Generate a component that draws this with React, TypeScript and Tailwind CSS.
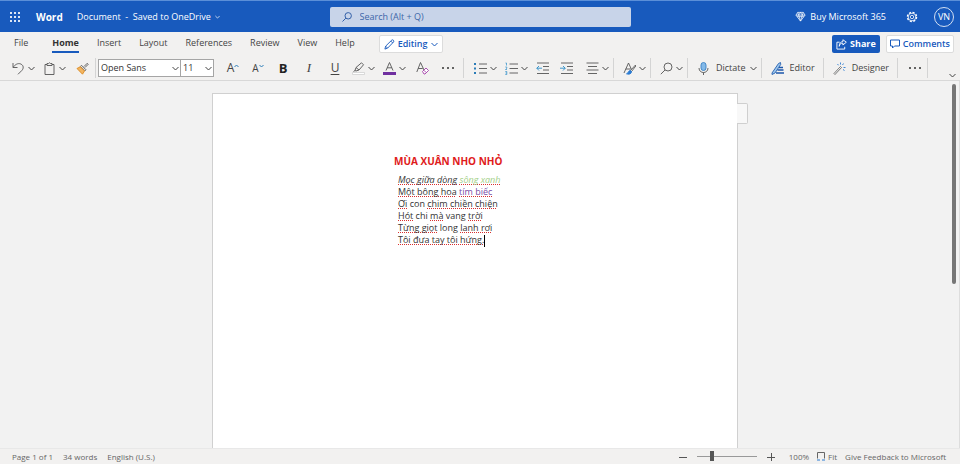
import React from "react";
import { clsx } from "clsx";

const TABS = ["File", "Home", "Insert", "Layout", "References", "Review", "View", "Help"];

type Word = { text: string; error?: boolean; tone?: string };

const POEM: { italic?: boolean; words: Word[] }[] = [
  {
    italic: true,
    words: [
      { text: "Mọc giữa dòng", error: true },
      { text: "sông xanh", error: true, tone: "text-[#a3cf86]" },
    ],
  },
  {
    words: [
      { text: "Một bông hoa", error: true },
      { text: "tím biếc", error: true, tone: "text-[#7a4aa5]" },
    ],
  },
  { words: [{ text: "Ơi", error: true }, { text: "con" }, { text: "chim chiền chiện", error: true }] },
  {
    words: [
      { text: "Hót", error: true },
      { text: "chi" },
      { text: "mà", error: true },
      { text: "vang" },
      { text: "trời", error: true },
    ],
  },
  { words: [{ text: "Từng giọt", error: true }, { text: "long" }, { text: "lanh rơi", error: true }] },
  { words: [{ text: "Tôi đưa tay tôi hứng.", error: true }] },
];

export default function App() {
  return (
    <div className="flex h-screen flex-col overflow-hidden bg-[#f2f1f0] font-['Open_Sans',sans-serif] text-[9px] leading-4 text-[#444]">
      <TopBar />
      <TabRow />
      <Toolbar />
      <Workspace />
      <StatusBar />
    </div>
  );
}

function TopBar() {
  return (
    <header className="flex h-8 shrink-0 items-center border-t border-[#5b8fd8] bg-[#185abd] px-1.5 text-white">
      <div className="flex flex-1 items-center">
        <button aria-label="App launcher" className="ml-1">
          <svg width="10" height="10" viewBox="0 0 10 10" fill="currentColor">
            {[0, 4, 8].map((y) => [0, 4, 8].map((x) => <rect key={`${x}-${y}`} x={x} y={y} width="2" height="2" rx=".7" />))}
          </svg>
        </button>
        <span className="ml-4 text-[10px] font-bold">Word</span>
        <button className="ml-3.5 flex items-center gap-1 whitespace-nowrap">
          Document&nbsp; -&nbsp; Saved to OneDrive
          <Chevron small />
        </button>
      </div>
      <label className="flex h-5 w-[301px] items-center gap-2 rounded-xs bg-[#c8d4e9] px-3 text-[#3360a8]">
        <SearchIcon size={10} />
        <input
          type="text"
          aria-label="Search"
          placeholder="Search (Alt + Q)"
          className="w-full bg-transparent outline-none placeholder:text-[#3d66a8]"
        />
      </label>
      <div className="flex flex-1 items-center justify-end">
        <button className="flex items-center gap-1 whitespace-nowrap">
          <svg width="11" height="11" viewBox="0 0 12 12" fill="none" stroke="currentColor" strokeWidth=".8" strokeLinejoin="round">
            <path d="M3 1.500h6l2 3L6 11 1 4.500zM1 4.500h10M4 4.500 6 11 8 4.500M3 1.500l1 3 2-3 2 3 1-3M2.300 6.200h7.400" />
          </svg>
          Buy Microsoft 365
        </button>
        <button aria-label="Settings" className="ml-5">
          <svg width="12" height="12" viewBox="0 0 12 12" fill="none" stroke="currentColor">
            <circle cx="6" cy="6" r="4.600" strokeWidth="1.300" strokeDasharray="2.100 1.510" />
            <circle cx="6" cy="6" r="3.800" strokeWidth=".8" />
            <circle cx="6" cy="6" r="1.700" strokeWidth=".8" />
          </svg>
        </button>
        <button className="ml-4 flex size-5 items-center justify-center rounded-full border border-white/80 text-[9px]">VN</button>
      </div>
    </header>
  );
}

function TabRow() {
  return (
    <nav className="flex h-6 shrink-0 items-center pr-1.5 pl-3.5">
      <div className="flex h-full items-center gap-[18px]">
        {TABS.map((tab) => (
          <button
            key={tab}
            className={clsx(
              "border-b-2",
              tab === "Home" ? "border-[#185abd] font-bold text-[#333]" : "border-transparent",
              tab === "File" && "mr-1.5"
            )}
          >
            {tab}
          </button>
        ))}
      </div>
      <button className="ml-6 flex h-[18px] items-center gap-[3px] rounded-xs border border-[#dcdcdc] bg-white px-1 font-semibold text-[#185abd]">
        <svg width="11" height="11" viewBox="0 0 12 12" fill="none" stroke="currentColor" strokeLinejoin="round">
          <path d="M1 11l.8-3.200L8.500 1.200q1-.7 1.800.2t.1 1.900L3.900 10zM7.500 2.300l2 2M1.900 7.900l2 2" />
        </svg>
        Editing
        <Chevron />
      </button>
      <div className="ml-auto flex gap-1.5">
        <button className="flex h-[18px] items-center gap-[3px] rounded-xs bg-[#185abd] px-1 font-bold text-white">
          <svg width="11" height="11" viewBox="0 0 12 12" fill="none" stroke="currentColor" strokeLinejoin="round">
            <path d="M4 3.500H1v7.500h8.500V8.500M3.500 8C4 5.500 5.500 4.500 7.500 4.500v2L11.300 3.500 7.500.8v2C5 3 3.500 5 3.500 8z" />
          </svg>
          Share
        </button>
        <button className="flex h-[18px] items-center gap-[3px] rounded-xs border border-[#dcdcdc] bg-white px-[3px] font-semibold text-[#185abd]">
          <svg width="10" height="10" viewBox="0 0 10 10" fill="none" stroke="currentColor">
            <path d="M.5 1h9v6H4.500L2.500 9V7h-2z" />
          </svg>
          Comments
        </button>
      </div>
    </nav>
  );
}

function Toolbar() {
  return (
    <div className="flex h-[25px] shrink-0 items-center border-b border-[#d8d8d8] pl-2">
      <Split label="Undo">
        <path d="M1 1v4.500h4.500M1.200 5.300C3 2.500 6 .8 8.800 2c3 1.400 3 4.500 1 6.500L6 12.300" />
      </Split>
      <Split label="Paste">
        <path d="M4 2.500H2v10h9v-10H9M4 1.500h1.500Q6.500 0 7.500 1.500H9v2H4z" />
      </Split>
      <Tool label="Format painter" className="w-6">
        <Glyph>
          <path d="M8 4.500l3.200-3.200 1 1L9 5.500" stroke="#555" />
          <path d="M5.500 3.300l4.500 4.500-1 1-4.500-4.500z" stroke="#555" fill="#fff" />
          <path d="M4.300 4.800l4.200 4.200-2 3.200L1 6.500z" fill="#f2b562" stroke="#dd8a1e" />
        </Glyph>
      </Tool>
      <div className="mr-0.5 ml-px h-5 w-px bg-[#d4d4d4]" />
      <Picker label="Font" value="Open Sans" className="w-[83px]" />
      <Picker label="Font size" value="11" className="-ml-px w-[34px]" />
      <Tool label="Grow font" className="ml-1.5 w-[26px]">
        <span className="text-xs">A</span>
        <svg width="5" height="9" viewBox="0 0 5 9" fill="none" stroke="#2b7cb8"><path d="M.5 3l2-2 2 2" /></svg>
      </Tool>
      <Tool label="Shrink font" className="w-6">
        <span className="text-[10px]">A</span>
        <svg width="5" height="9" viewBox="0 0 5 9" fill="none" stroke="#2b7cb8"><path d="M.5 1l2 2 2-2" /></svg>
      </Tool>
      <Tool label="Bold" className="w-[26px] text-[13px] font-bold text-[#222]">B</Tool>
      <Tool label="Italic" className="w-[26px] font-['Liberation_Serif',serif] text-[13px] italic">I</Tool>
      <Tool label="Underline" className="w-[26px] text-xs underline underline-offset-2">U</Tool>
      <Split label="Highlight">
        <path d="M3 8.500l1-3L9.500.8l2 2L7 8l-3 1zM4 5.500l3 2.500M3 8.500L1.500 9.500" />
        <path d="M.5 10.500h12v2H.5z" fill="#fff" stroke="#ccc" strokeWidth=".7" />
      </Split>
      <Split label="Font color">
        <path d="M3 8.500L6.500.5 10 8.500M4.200 5.800h4.600" />
        <path d="M0 10h13v3H0z" fill="#7030a0" stroke="none" />
      </Split>
      <Tool label="Clear formatting" className="w-6">
        <Glyph>
          <path d="M.8 10L4.500.5 8 8M2.200 6.500h4.500" />
          <path d="M6.500 9.500l3.500-3.500 2.500 2.500-3.500 3.500H8zM7.800 8.200l2.500 2.500" stroke="#a33fa8" fill="#fff" />
        </Glyph>
      </Tool>
      <Tool label="More font options" className="ml-0.5 w-6"><Dots /></Tool>
      <Divider />
      <Split label="Bullets">
        <path d="M5 2h8M5 6.500h8M5 11h8" />
        <path d="M0 1h2v2H0zM0 5.500h2v2H0zM0 10h2v2H0z" fill="#2b7cb8" stroke="none" />
      </Split>
      <Split label="Numbering">
        <path d="M4.500 2H13M4.500 6.500H13M4.500 11H13" />
        <path d="M.5 1h1v2.500M.3 5h1.500v1.200l-1.300 1.300h1.500M.3 9.500h1.500v3H.3M.5 11h1.300" stroke="#2b8cc8" strokeWidth=".7" />
      </Split>
      <Tool label="Decrease indent" className="mr-0.5 w-5">
        <Glyph>
          <path d="M1 1h12M7 4.500h6M7 8h6M1 11.500h12" />
          <path d="M6 6.200H.8M3 4L.8 6.200 3 8.500" stroke="#2b8cc8" />
        </Glyph>
      </Tool>
      <Tool label="Increase indent" className="mr-1 w-6">
        <Glyph>
          <path d="M1 1h12M7 4.500h6M7 8h6M1 11.500h12" />
          <path d="M0 6.200h5.200M3 4l2.200 2.200L3 8.500" stroke="#2b8cc8" />
        </Glyph>
      </Tool>
      <Split label="Alignment">
        <path d="M.5 1h12M2 4.500h9M.5 8h12M2 11.500h9" />
      </Split>
      <Divider tight />
      <Split label="Styles">
        <path d="M1 11L5.500 1l3 6.500M2.800 7h5" />
        <path d="M12.500 3L7.500 8.500l1 1L12.800 4z" fill="#fff" />
        <path d="M7.300 8.500c-2 0-1.500 2.500-3.800 3.300 2.500 1 5 .2 5-2.300z" fill="#2b7cd3" stroke="#2b7cd3" />
      </Split>
      <Divider tight />
      <Split label="Find">
        <circle cx="8" cy="5" r="4" />
        <path d="M5 8L.8 12.200" />
      </Split>
      <Divider tight />
      <Tool label="Dictate" className="gap-1 px-1">
        <Glyph>
          <rect x="4" y=".5" width="5" height="8" rx="2.500" fill="#83b9e8" stroke="#3c82c4" />
          <path d="M2 6c0 6 9 6 9 0M6.500 10.500v2.500" stroke="#555" />
        </Glyph>
        <span className="pl-0.5">Dictate</span>
        <Chevron />
      </Tool>
      <Divider tight />
      <Tool label="Editor" className="gap-1.5 pr-2 pl-1">
        <Glyph>
          <path d="M1 11L7.500 1.500l2-1 .2 2L4 11l-3 1.500z" fill="#9cc6ee" stroke="#245fae" />
          <path d="M8 5.500h4M6.500 8h6M5 11h8" stroke="#1c57ab" strokeWidth="1.600" />
        </Glyph>
        Editor
      </Tool>
      <Divider tight />
      <Tool label="Designer" className="gap-1.5 pr-2 pl-1">
        <Glyph>
          <path d="M1 11.500L7.500 4.500l1 1L2 12.500z" fill="#fff" stroke="#555" strokeWidth=".8" />
          <path d="M7.500.5v2M10.500 1.500L9.500 3M12.500 5.500h-2M4.500 2l1 1.300M10 7.500l1.500 1" stroke="#2b7cd3" />
        </Glyph>
        Designer
      </Tool>
      <Divider tight />
      <Tool label="More commands" className="w-6"><Dots /></Tool>
      <Divider tight />
      <button aria-label="Collapse ribbon" className="mr-1 ml-auto self-end pb-0.5"><Chevron /></button>
    </div>
  );
}

function Workspace() {
  return (
    <div className="flex min-h-0 flex-1 bg-[#f2f2f2]">
      <main className="min-w-0 flex-1 pt-3">
        <article className="relative mx-auto h-full w-[526px] max-w-full border border-b-0 border-[#d0d0d0] bg-white pt-[59px] pl-[181px] text-[#333]">
          <h1 className="text-[10px] leading-4 font-bold text-[#e01b1b]">MÙA XUÂN NHO NHỎ</h1>
          <div className="mt-[5px] ml-1 text-[9px] leading-3">
            {POEM.map((line, i) => (
              <p key={i} className={clsx("whitespace-nowrap", line.italic && "italic")}>
                {line.words.map((word, j) => (
                  <React.Fragment key={j}>
                    {j > 0 && " "}
                    <span
                      className={clsx(
                        word.tone,
                        word.error && "underline decoration-[#d83030] decoration-dotted decoration-1 underline-offset-1 [text-decoration-skip-ink:none]"
                      )}
                    >
                      {word.text}
                    </span>
                  </React.Fragment>
                ))}
                {i === POEM.length - 1 && <span className="inline-block h-3 w-px bg-black align-middle" />}
              </p>
            ))}
          </div>
          <div className="absolute top-[9px] left-full h-[21px] w-[11px] rounded-r-xs border border-l-0 border-[#cfcfcf] bg-[#f8f8f8]" />
        </article>
      </main>
      <div className="w-2.5 shrink-0 border-r border-[#ddd] px-0.5 pt-[3px]">
        <div className="h-[200px] w-1 rounded-full bg-[#767676]" />
      </div>
    </div>
  );
}

function StatusBar() {
  return (
    <footer className="flex h-4 shrink-0 items-center border-t border-[#e8e8e8] bg-[#f2f1f0] pr-3.5 pl-3 text-[8px] whitespace-nowrap text-[#666]">
      <span>Page 1 of 1</span>
      <span className="ml-2.5">34 words</span>
      <span className="ml-2.5">English (U.S.)</span>
      <div className="ml-auto flex items-center">
        <button aria-label="Zoom out">
          <svg width="8" height="8" viewBox="0 0 8 8" stroke="#555"><path d="M0 4.500h8" /></svg>
        </button>
        <input
          type="range"
          aria-label="Zoom"
          min={10}
          max={400}
          defaultValue={100}
          className="mx-2.5 h-2.5 w-[60px] appearance-none bg-transparent [&::-webkit-slider-runnable-track]:h-px [&::-webkit-slider-runnable-track]:bg-[#999] [&::-webkit-slider-thumb]:-mt-[5px] [&::-webkit-slider-thumb]:h-2.5 [&::-webkit-slider-thumb]:w-1 [&::-webkit-slider-thumb]:appearance-none [&::-webkit-slider-thumb]:bg-[#555]"
        />
        <button aria-label="Zoom in">
          <svg width="8" height="8" viewBox="0 0 8 8" stroke="#555"><path d="M0 4.500h8M4.500 0v8" /></svg>
        </button>
        <span className="ml-3.5">100%</span>
        <button className="ml-2 flex items-center gap-[3px]">
          <svg width="8" height="9" viewBox="0 0 8 9" fill="none" stroke="#666">
            <path d="M.5 6.500v-6h7v6" />
            <path d="M0 8h8" stroke="#2b7cd3" strokeDasharray="3 2" />
          </svg>
          Fit
        </button>
        <a href="#feedback" className="ml-2">Give Feedback to Microsoft</a>
      </div>
    </footer>
  );
}

function Tool({ label, className, children }: { label: string; className?: string; children: React.ReactNode }) {
  return (
    <button aria-label={label} className={clsx("flex h-5 shrink-0 items-center justify-center", className)}>
      {children}
    </button>
  );
}

// Icon with its own drop-down arrow
function Split({ label, children }: { label: string; children: React.ReactNode }) {
  return (
    <Tool label={label} className="gap-[3px] px-1">
      <Glyph>{children}</Glyph>
      <Chevron />
    </Tool>
  );
}

function Picker({ label, value, className }: { label: string; value: string; className?: string }) {
  return (
    <div className={clsx("relative shrink-0", className)}>
      <select
        aria-label={label}
        defaultValue={value}
        className="block h-[18px] w-full appearance-none border border-[#a5a5a5] bg-white pl-0.5 text-[#333]"
      >
        <option>{value}</option>
      </select>
      <span className="pointer-events-none absolute inset-y-0 right-0.5 flex items-center"><Chevron /></span>
    </div>
  );
}

function Glyph({ children }: { children: React.ReactNode }) {
  return (
    <svg width="13" height="13" viewBox="0 0 13 13" fill="none" stroke="#555" strokeWidth=".9" className="shrink-0">
      {children}
    </svg>
  );
}

function Divider({ tight }: { tight?: boolean }) {
  return <div className={clsx("h-5 w-px shrink-0 bg-[#d4d4d4]", tight ? "mr-[5px]" : "mr-1.5 ml-[3px]")} />;
}

function Chevron({ small }: { small?: boolean }) {
  return (
    <svg width={small ? 5 : 7} height={small ? 4 : 5} viewBox="0 0 7 5" fill="none" stroke="currentColor" strokeWidth="1" className="shrink-0">
      <path d="M.5 1l3 3 3-3" />
    </svg>
  );
}

function SearchIcon({ size }: { size: number }) {
  return (
    <svg width={size} height={size} viewBox="0 0 10 10" fill="none" stroke="currentColor" className="shrink-0">
      <circle cx="6.200" cy="3.800" r="3.200" />
      <path d="M3.900 6.100L.5 9.500" />
    </svg>
  );
}

function Dots() {
  return (
    <svg width="12" height="2" viewBox="0 0 12 2" fill="#333">
      <circle cx="1" cy="1" r="1" />
      <circle cx="6" cy="1" r="1" />
      <circle cx="11" cy="1" r="1" />
    </svg>
  );
}
